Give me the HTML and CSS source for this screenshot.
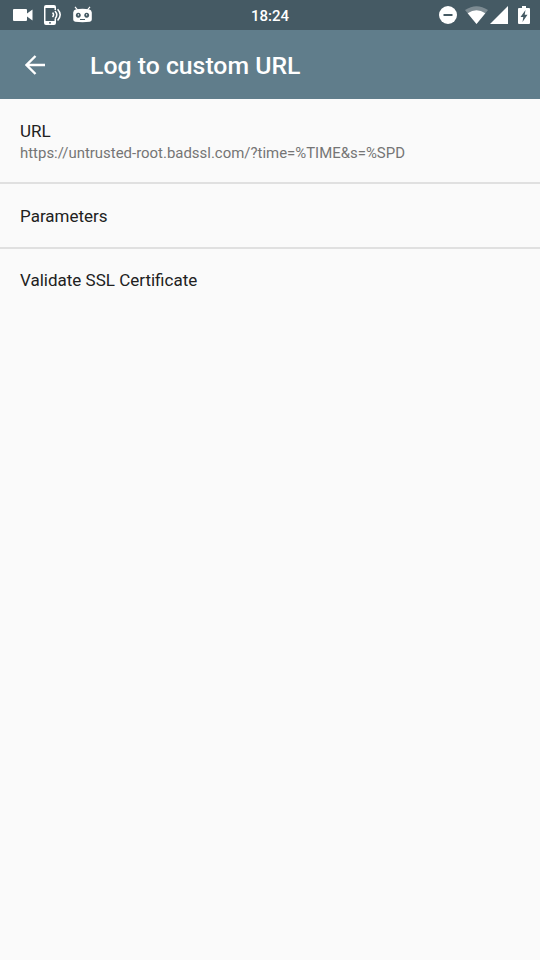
FILE: index.html
```html
<!DOCTYPE html>
<html lang="en">
<head>
<meta charset="utf-8">
<title>Log to custom URL</title>
<link rel="stylesheet" href="styles.css">
</head>
<body>
<div class="status">
  <div class="notifications">
    <svg width="20" height="14" viewBox="0 0 20 14"><path fill="#fff" d="M1 1h12q1 0 1 1v3.500l5.500-4v11l-5.500-4V12q0 1-1 1H1q-1 0-1-1V2q0-1 1-1z"/></svg>
    <svg width="18" height="20" viewBox="0 0 18 20"><path fill="#fff" fill-rule="evenodd" d="M2 0h8q2 0 2 2v3h-1.500V3h-9v13h9v-2H12v4q0 2-2 2H2q-2 0-2-2V2q0-2 2-2zm3 17.200v1.300h2v-1.300z"/><path d="M8.500 7.600q2.200 2.200 0 4.400M11 5.900q3.600 3.900 0 7.800M13.600 4.200q5.200 5.600 0 11.200" fill="none" stroke="#fff" stroke-width="1.500"/></svg>
    <svg class="robot" width="19" height="17" viewBox="0 0 19 17"><path d="M2 .8l2.500 3M17 .8l-2.500 3" stroke="#fff" stroke-width="1.200"/><path fill="#fff" fill-rule="evenodd" d="M2.500 3.500q7-1.600 14 0 2 .6 2.300 3v7q0 2-2 2.300-7.300.7-14.600 0-2-.3-2-2.300v-7q.3-2.400 2.300-3zm2.800 3.200a2.500 2.500 0 1 0 .01 0zm8.400 0a2.500 2.500 0 1 0 .01 0zM7 13v1h5v-1z"/><path fill="#fff" d="M4.800 8.200h1.200v1.200H4.800zM13 8.200h1.200v1.200H13z"/></svg>
  </div>
  <div class="clock">18:24</div>
  <div class="indicators">
    <svg class="dnd" width="18" height="18" viewBox="0 0 18 18"><circle cx="9" cy="9" r="9" fill="#fff"/><path fill="#455a64" d="M4.500 8h9v2h-9z"/></svg>
    <svg class="wifi" width="23" height="18" viewBox="0 0 23 18"><path fill="#fff" opacity=".3" d="M0 4Q11.500-3.600 23 4L11.500 18z"/><path fill="#fff" d="M2.700 7.200Q11.500 1.500 20.300 7.200L11.500 18z"/></svg>
    <svg class="signal" width="18" height="18" viewBox="0 0 18 18"><path fill="#fff" d="M18 0v18H0z"/></svg>
    <svg width="12" height="18" viewBox="0 0 12 18"><path fill="#fff" fill-rule="evenodd" d="M4 0h4v2h3q1 0 1 1v14q0 1-1 1H1q-1 0-1-1V3q0-1 1-1h3zM7.500 4L2.500 11H5.300l-.8 5L9.500 8.800H6.700z"/></svg>
  </div>
</div>
<header class="toolbar">
  <svg class="back" width="20" height="20" viewBox="0 0 20 20"><path d="M20 10H1.500M10.500 1L1.500 10l9 9" fill="none" stroke="#fff" stroke-width="2.400"/></svg>
  <h1 class="heading">Log to custom URL</h1>
</header>
<main>
  <section class="row row-tall">
    <div class="label">URL</div>
    <div class="detail"><span>https://untrusted-root.badssl.com/?time=%TIME&amp;s=%SPD</span></div>
  </section>
  <section class="row"><div class="label">Parameters</div></section>
  <section class="row row-last"><div class="label">Validate SSL Certificate</div></section>
</main>
</body>
</html>
```
FILE: styles.css
```css
* { box-sizing: border-box; }
body {
  margin: 0;
  min-height: 960px;
  background: #fafafa;
  color: #212121;
  font-family: Roboto, sans-serif;
}
svg { display: block; flex: none; }
.status {
  display: grid;
  grid-template-columns: 1fr auto 1fr;
  align-items: center;
  height: 30px;
  padding: 0 10px;
  background: #455a64;
  color: #fff;
}
.notifications { display: flex; align-items: center; gap: 11px; padding-left: 3px; }
.robot { margin-top: -1px; }
.clock { font-size: 15px; font-weight: 500; line-height: 30px; padding-top: 1px; height: 30px; }
.indicators { display: flex; align-items: center; justify-content: flex-end; }
.dnd { margin-right: 8px; }
.wifi { margin-right: 2px; }
.signal { margin-right: 10px; }
.toolbar {
  display: flex;
  align-items: center;
  height: 69px;
  padding-left: 25px;
  background: #607d8b;
  color: #fff;
}
.heading { margin: 3px 0 0 45px; font-size: 24.8px; font-weight: 500; line-height: 30px; }
.row {
  height: 65px;
  padding: 21px 20px 0;
  border-bottom: 2px solid #e0e0e0;
}
.row-tall { height: 85px; }
.row-last { padding-top: 20px; border-bottom: 0; }
.label { font-size: 17px; line-height: 22px; }
.detail { margin-top: 1px; font-size: 14.95px; line-height: 20px; color: #757575; }
```
